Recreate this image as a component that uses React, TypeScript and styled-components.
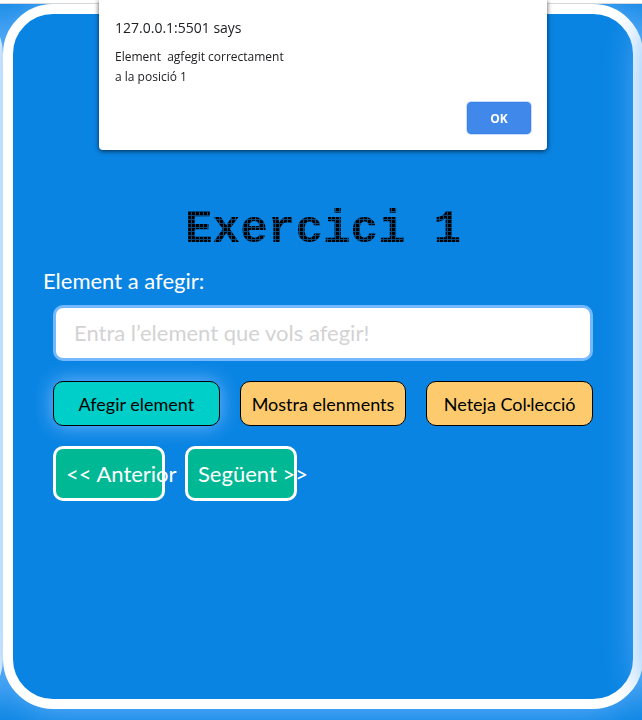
import React from "react";
import styled, { createGlobalStyle, css } from "styled-components";

const blue = "#0984e3";
const sky = "#74b9ff";
const glow = `0 0 40px ${sky}`;

const GlobalStyle = createGlobalStyle`
  *, *::before, *::after { box-sizing: border-box; }
  body {
    margin: 0;
    background: ${blue};
    font-family: Lato, "Open Sans", sans-serif;
  }
`;

const Page = styled.div`
  display: flex;
  flex-direction: column;
  min-height: 100vh;
  overflow: hidden;
`;

const BrowserEdge = styled.div`
  flex: none;
  height: 4px;
  background: #fff;
  border-bottom: 1px solid #d5d7da;
`;

const Carousel = styled.main`
  flex: 1;
  display: flex;
  justify-content: center;
  padding: 0 0 11px 4px;
  overflow: hidden;
`;

const Card = styled.section`
  flex: 0 0 calc(100% + 2px);
  min-width: 0;
  padding: 189px 30px 30px;
  border: 10px solid #fff;
  border-radius: 50px;
  background: ${blue};
  box-shadow: ${glow};
`;

const Title = styled.h1`
  margin: 0;
  font: 700 46px/54px "Liberation Mono", monospace;
  text-align: center;
  color: transparent;
  background-color: #000;
  background-image:
    linear-gradient(to right, #06497f 1px, transparent 1px),
    linear-gradient(to bottom, #06497f 1px, transparent 1px);
  background-size: 4px 4px;
  background-clip: text;
  -webkit-background-clip: text;
`;

const Label = styled.label`
  display: block;
  margin-top: 8px;
  font-size: 22px;
  line-height: 32px;
  color: #fff;
`;

const Field = styled.div`
  padding: 8px 10px 0;
`;

const TextInput = styled.input`
  display: block;
  width: 100%;
  height: 56px;
  padding: 0 18px 2px;
  border: 3px solid ${sky};
  border-radius: 10px;
  outline: none;
  background: #fff;
  color: #000;
  font: 400 22px Lato, sans-serif;
  &::placeholder { color: #d3d3d3; opacity: 1; }
`;

const Actions = styled.div`
  display: grid;
  grid-template-columns: repeat(3, minmax(0, 1fr));
  gap: 20px;
  padding: 20px 10px;
`;

const ActionButton = styled.button<{ $active?: boolean }>`
  height: 45px;
  padding: 0;
  border: 1px solid #000;
  border-radius: 10px;
  background: #fdcb6e;
  color: #000;
  font: 400 18px Lato, sans-serif;
  white-space: nowrap;
  ${(p) => p.$active && css`
    background: #00cec9;
    box-shadow: 0 0 20px ${sky};
  `}
`;

const Pager = styled.nav`
  display: flex;
  gap: 20px;
  padding: 0 10px;
`;

const PagerLink = styled.a`
  width: 112px;
  height: 55px;
  padding: 0 10px;
  border: 3px solid #fff;
  border-radius: 10px;
  background: #00b894;
  color: #fff;
  font-size: 22px;
  line-height: 50px;
  text-decoration: none;
  white-space: nowrap;
`;

const Dialog = styled.div`
  position: fixed;
  top: 0;
  left: 99px;
  right: 95px;
  display: flex;
  flex-direction: column;
  padding: 18px 16px 16px;
  border-radius: 0 0 4px 4px;
  background: #fff;
  box-shadow: 0 1px 5px rgba(0, 0, 0, 0.7);
  color: #202124;
  font-family: "Open Sans", "Noto Sans", sans-serif;
`;

const DialogTitle = styled.h2`
  margin: 0 0 9px;
  font-size: 14px;
  line-height: 20px;
  font-weight: 400;
`;

const DialogText = styled.p`
  margin: 0 0 15px;
  font-size: 12px;
  line-height: 20px;
  white-space: pre-wrap;
`;

const OkButton = styled.button`
  align-self: flex-end;
  width: 64px;
  height: 32px;
  padding: 0;
  border: 1px solid #3b82e8;
  border-radius: 4px;
  box-shadow: 0 0 0 1px #c9dff9;
  background: #4089eb;
  color: #fff;
  font: 700 12px "Open Sans", sans-serif;
`;

export default function App() {
  return (
    <Page>
      <GlobalStyle />
      <BrowserEdge />
      <Carousel>
        <Card aria-hidden="true" />
        <Card>
          <Title>Exercici 1</Title>
          <Label htmlFor="element">Element a afegir:</Label>
          <Field>
            <TextInput id="element" type="text" placeholder="Entra l’element que vols afegir!" />
          </Field>
          <Actions>
            <ActionButton type="button" $active>Afegir element</ActionButton>
            <ActionButton type="button">Mostra elenments</ActionButton>
            <ActionButton type="button">Neteja Col·lecció</ActionButton>
          </Actions>
          <Pager>
            <PagerLink href="#anterior">&lt;&lt; Anterior</PagerLink>
            <PagerLink href="#seguent">Següent &gt;&gt;</PagerLink>
          </Pager>
        </Card>
        <Card aria-hidden="true" />
      </Carousel>
      <Dialog role="alertdialog" aria-labelledby="dialog-title" aria-describedby="dialog-text">
        <DialogTitle id="dialog-title">127.0.0.1:5501 says</DialogTitle>
        <DialogText id="dialog-text">{"Element  agfegit correctament\na la posició 1"}</DialogText>
        <OkButton type="button">OK</OkButton>
      </Dialog>
    </Page>
  );
}
